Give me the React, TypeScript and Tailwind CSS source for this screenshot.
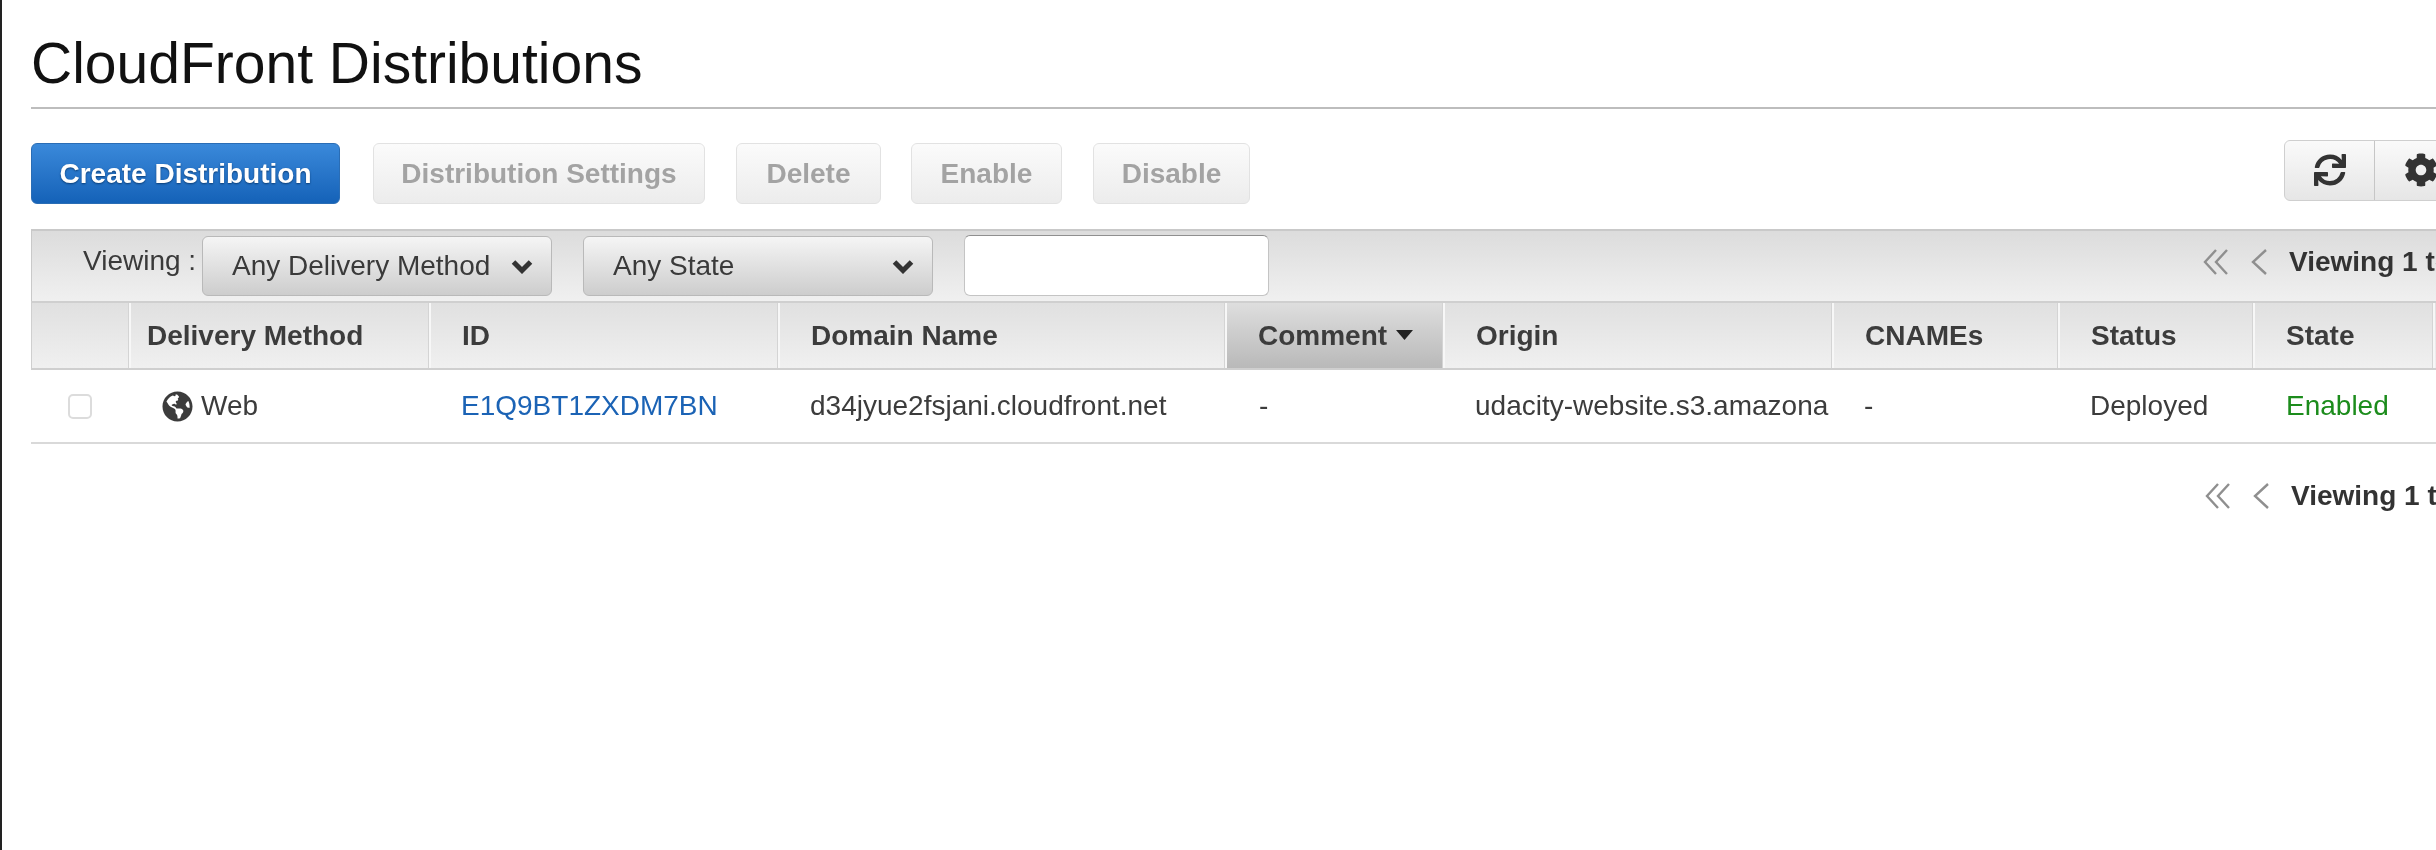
import { FaGlobeAmericas, FaSync, FaCog } from "react-icons/fa";

function Doubles() {
  return (
    <svg width="27" height="28" viewBox="0 0 27 28" fill="none" stroke="#8f8f8f" strokeWidth="2.4" className="shrink-0">
      <path d="M14 2 L3 14 L14 26" />
      <path d="M25 2 L14 14 L25 26" />
    </svg>
  );
}

function Single() {
  return (
    <svg width="18" height="28" viewBox="0 0 18 28" fill="none" stroke="#8f8f8f" strokeWidth="2.4" className="shrink-0">
      <path d="M16 2 L3 14 L16 26" />
    </svg>
  );
}

function Pager({ className }: { className: string }) {
  return (
    <div className={`flex items-center shrink-0 ${className}`}>
      <Doubles />
      <div className="ml-[21px]"><Single /></div>
      <span className="ml-[21px] font-bold text-[28px] text-[#333] whitespace-nowrap">Viewing 1 to 1 of 1</span>
    </div>
  );
}

function ActionButton({ label, className }: { label: string; className: string }) {
  return (
    <button className={`h-[61px] shrink-0 rounded-[6px] border border-[#e2e2e2] bg-gradient-to-b from-[#fbfbfb] to-[#ececec] font-bold text-[28px] text-[#a3a3a3] whitespace-nowrap ${className}`}>
      {label}
    </button>
  );
}

function Select({ label, className }: { label: string; className: string }) {
  return (
    <div className={`h-[60px] -mt-[1px] shrink-0 flex items-center rounded-[6px] border border-[#b9b9b9] bg-gradient-to-b from-[#f5f5f5] to-[#cdcdcd] pl-[29px] pr-[18px] text-[28px] text-[#3a3a3a] ${className}`}>
      <span className="whitespace-nowrap">{label}</span>
      <svg width="22" height="15" viewBox="0 0 22 15" fill="none" stroke="#333" strokeWidth="5" className="ml-auto mt-[2px]">
        <path d="M2.5 3 L11 11.5 L19.5 3" />
      </svg>
    </div>
  );
}

const headers: { label: string; sorted?: boolean; first?: boolean }[] = [
  { label: "" },
  { label: "Delivery Method", first: true },
  { label: "ID" },
  { label: "Domain Name" },
  { label: "Comment", sorted: true },
  { label: "Origin" },
  { label: "CNAMEs" },
  { label: "Status" },
  { label: "State" },
  { label: "" },
];

const gridCols = "grid grid-cols-[99px_300px_349px_447px_218px_389px_226px_195px_180px_40px]";

export default function App() {
  return (
    <div className="h-[850px] w-[2436px] overflow-hidden bg-white border-l-2 border-[#222] font-['Liberation_Sans',Arial,sans-serif]">
      <div className="pl-[29px] blur-[0.5px]">
        <h1 className="pt-[31px] h-[109px] text-[57px] leading-[64px] font-normal text-[#111] border-b-2 border-[#bdbdbd]">
          CloudFront Distributions
        </h1>

        <div className="mt-[34px] flex items-center h-[61px]">
          <button className="h-[61px] w-[309px] shrink-0 rounded-[6px] border border-[#2a6db5] bg-gradient-to-b from-[#3a89da] to-[#1462b8] font-bold text-[28px] text-white [text-shadow:0_1px_2px_#0b3d75] whitespace-nowrap">
            Create Distribution
          </button>
          <ActionButton label="Distribution Settings" className="ml-[33px] w-[332px]" />
          <ActionButton label="Delete" className="ml-[31px] w-[145px]" />
          <ActionButton label="Enable" className="ml-[30px] w-[151px]" />
          <ActionButton label="Disable" className="ml-[31px] w-[157px]" />
          <div className="ml-[1034px] -mt-[7px] h-[61px] w-[220px] shrink-0 flex rounded-l-[6px] border border-[#cfcfcf] bg-gradient-to-b from-[#fafafa] to-[#e6e6e6]">
            <div className="w-[90px] flex items-center justify-center border-r border-[#c6c6c6]">
              <FaSync className="text-[32px] text-[#333]" />
            </div>
            <div className="pl-[29px] flex items-center">
              <FaCog className="text-[34px] text-[#333]" />
            </div>
          </div>
        </div>

        <div className="mt-[25px] h-[72px] flex items-center border-t-2 border-l border-[#c9c9c9] bg-gradient-to-b from-[#dcdcdc] to-[#f0f0f0]">
          <span className="ml-[51px] -mt-[10px] shrink-0 w-[119px] text-[28px] text-[#3a3a3a] whitespace-nowrap">Viewing :</span>
          <Select label="Any Delivery Method" className="w-[350px]" />
          <Select label="Any State" className="ml-[31px] w-[350px]" />
          <div className="ml-[31px] -mt-[1px] h-[61px] w-[305px] shrink-0 rounded-[6px] border border-[#c4c4c4] border-t-[#8f8f8f] bg-white" />
          <Pager className="ml-[933px] -mt-[8px]" />
        </div>

        <div className={`${gridCols} h-[69px] border-y-2 border-y-[#cfcfcf] border-l border-l-[#cfcfcf] bg-gradient-to-b from-[#e0e0e0] to-[#f0f0f0]`}>
          {headers.map((h, i) => (
            <div
              key={i}
              className={`flex items-center ${h.first ? "pl-[16px]" : "pl-[31px]"} font-bold text-[28px] text-[#3c3c3c] whitespace-nowrap border-r-2 border-[#f7f7f7] shadow-[inset_-1px_0_0_#d4d4d4] ${h.sorted ? "bg-gradient-to-b from-[#dedede] to-[#b9b9b9]" : ""}`}
            >
              {h.label}
              {h.sorted && (
                <svg width="17" height="10" viewBox="0 0 17 10" className="ml-[9px] -mt-[2px]">
                  <polygon points="0,0 17,0 8.5,10" fill="#222" />
                </svg>
              )}
            </div>
          ))}
        </div>

        <div className={`${gridCols} h-[74px] border-b-2 border-[#d9d9d9] text-[28px] text-[#3c3c3c]`}>
          <div className="flex items-center pl-[37px]">
            <div className="w-[24px] h-[25px] rounded-[5px] border-2 border-[#dcdcdc] bg-white" />
          </div>
          <div className="flex items-center pl-[32px]">
            <FaGlobeAmericas className="text-[31px] text-[#3c3c3c]" />
            <span className="ml-[8px]">Web</span>
          </div>
          <div className="flex items-center pl-[31px] text-[#1b63b5]">E1Q9BT1ZXDM7BN</div>
          <div className="flex items-center pl-[31px]">d34jyue2fsjani.cloudfront.net</div>
          <div className="flex items-center pl-[33px]">-</div>
          <div className="flex items-center pl-[31px] overflow-hidden whitespace-nowrap">udacity-website.s3.amazona</div>
          <div className="flex items-center pl-[31px]">-</div>
          <div className="flex items-center pl-[31px]">Deployed</div>
          <div className="flex items-center pl-[32px] text-[#1c8c1c]">Enabled</div>
          <div />
        </div>

        <div className="mt-[31px] flex">
          <Pager className="ml-[2173px]" />
        </div>
      </div>
    </div>
  );
}
